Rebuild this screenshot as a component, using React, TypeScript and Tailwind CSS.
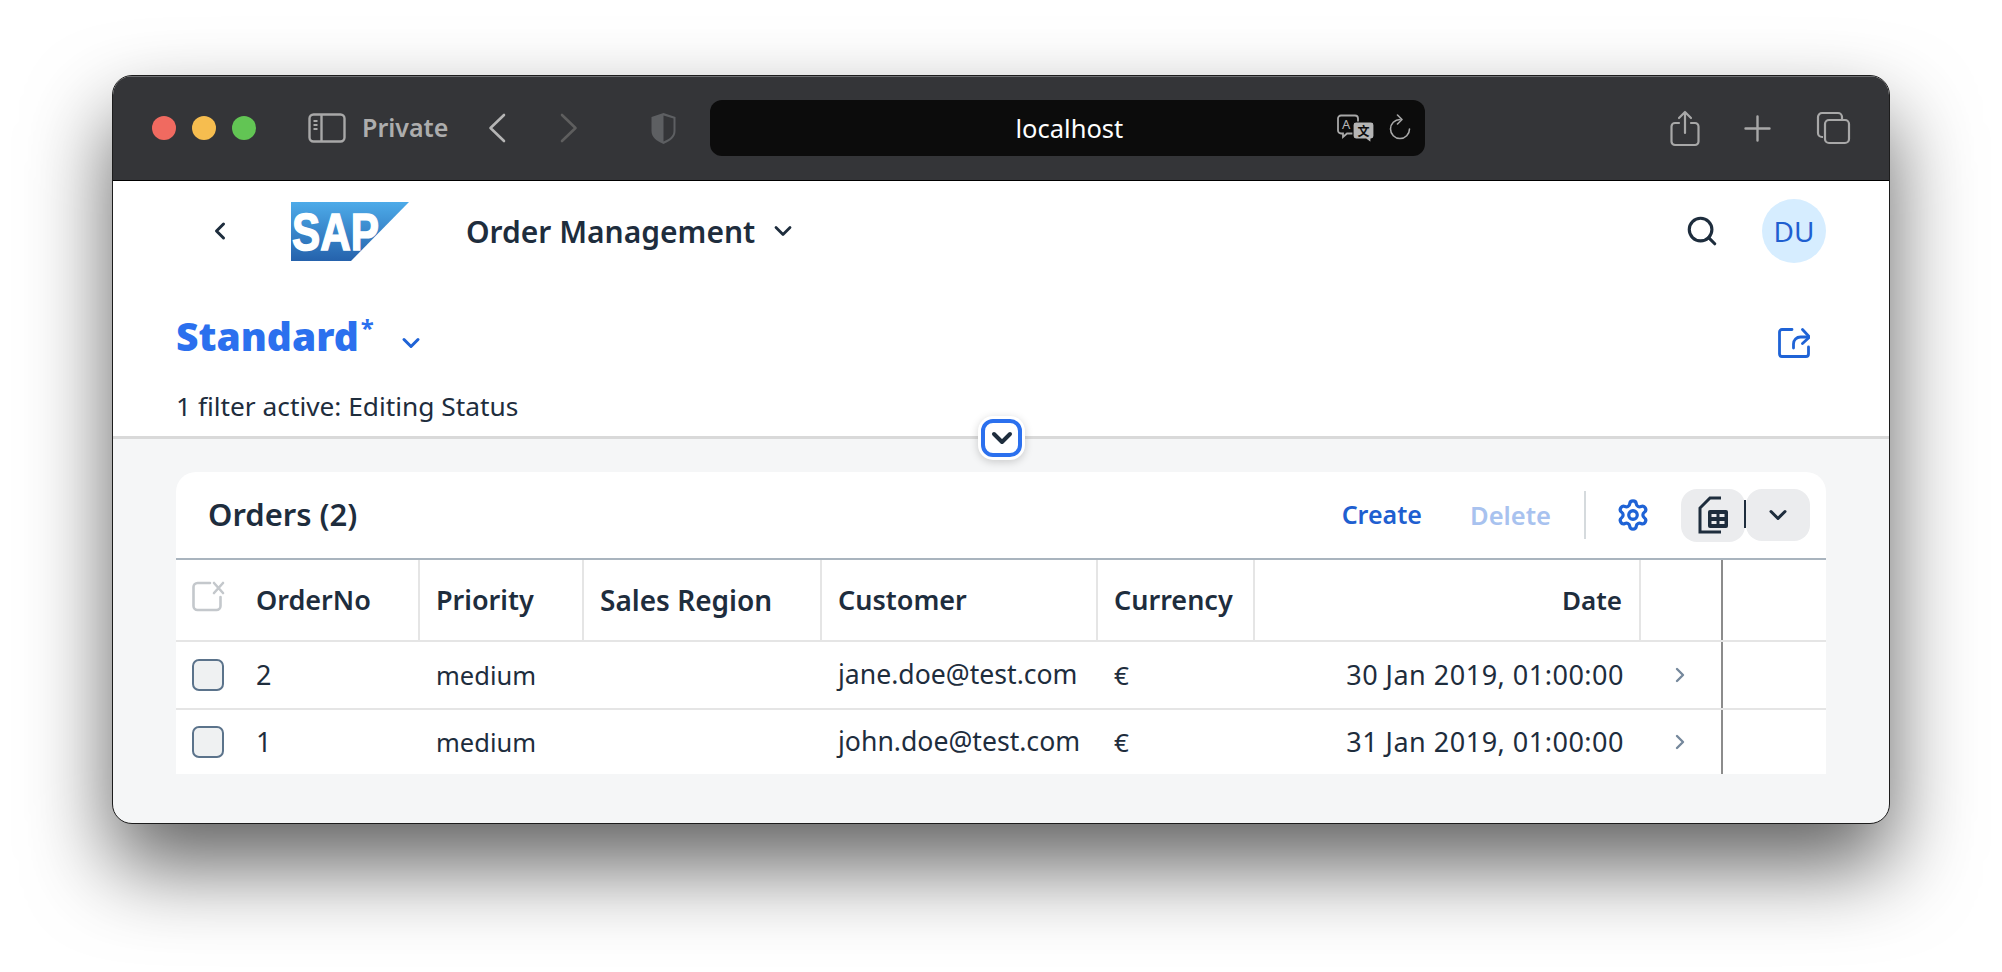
import { ChevronDown, ChevronLeft, ChevronRight, Search, Settings } from "lucide-react";

const FONT = "font-['Noto_Sans',sans-serif]";

const rows = [
  { no: "2", email: "jane.doe@test.com", date: "30 Jan 2019, 01:00:00" },
  { no: "1", email: "john.doe@test.com", date: "31 Jan 2019, 01:00:00" },
];

const COLS = "grid grid-cols-[67px_177px_164px_238px_276px_157px_386px_82px_1fr]";

function SidebarIcon() {
  return (
    <svg width="38" height="30" viewBox="0 0 38 30" fill="none" stroke="#a8a8a8" strokeWidth="2.4">
      <rect x="1.5" y="1.5" width="35" height="27" rx="4" />
      <path d="M13.5 1.5v27" />
      <path d="M5.5 8h4M5.5 12h4M5.5 16h4" strokeWidth="2" />
    </svg>
  );
}

function NavChevron({ back, color }: { back?: boolean; color: string }) {
  return (
    <svg width="18" height="30" viewBox="0 0 18 30" fill="none" stroke={color} strokeWidth="2.6" strokeLinecap="round" strokeLinejoin="round">
      <path d={back ? "M16 2 2.500 15 16 28" : "M2 2l13.500 13L2 28"} />
    </svg>
  );
}

function ShieldIcon() {
  return (
    <svg width="27" height="33" viewBox="0 0 27 33">
      <path d="M13.5 1 25.5 5v14c0 6-5 10-12 13C6.500 29 1.500 25 1.500 19V5z" fill="#5d5f62" />
      <path d="M13.500 3.500 23.500 6.500v12.500c0 5-4 8-10 10.500z" fill="#343538" />
    </svg>
  );
}

function TranslateIcon() {
  return (
    <svg width="38" height="30" viewBox="0 0 38 30">
      <path d="M4 1.500h14a3 3 0 0 1 3 3v12a3 3 0 0 1-3 3h-8l-4 3.500v-3.500H4a3 3 0 0 1-3-3v-12a3 3 0 0 1 3-3z" fill="#0c0c0c" stroke="#a8a8a8" strokeWidth="1.800" />
      <text x="5" y="15" fontSize="13" fill="#b5b5b5" fontFamily="Noto Sans, sans-serif">A</text>
      <path d="M19 8h15a3 3 0 0 1 3 3v11a3 3 0 0 1-3 3v4l-5-4h-10a3 3 0 0 1-3-3v-11a3 3 0 0 1 3-3z" fill="#b5b5b5" stroke="#0c0c0c" strokeWidth="1.200" />
      <text x="20.500" y="22" fontSize="12" fontWeight="700" fill="#0c0c0c" fontFamily="Noto Sans CJK SC, sans-serif">文</text>
    </svg>
  );
}

function ReloadIcon() {
  return (
    <svg width="22" height="26" viewBox="0 0 22 26" fill="none" stroke="#a8a8a8" strokeWidth="1.600" strokeLinecap="round" strokeLinejoin="round">
      <path d="M11 5.500a9.500 9.500 0 1 0 9.500 9.500" />
      <path d="M8.500 1 13 5.500 8.500 10" />
    </svg>
  );
}

function ShareIcon() {
  return (
    <svg width="30" height="37" viewBox="0 0 30 37" fill="none" stroke="#a8a8a8" strokeWidth="2.200" strokeLinecap="round" strokeLinejoin="round">
      <path d="M9 13H5a3.500 3.500 0 0 0-3.500 3.500v15A3.500 3.500 0 0 0 5 35h20a3.500 3.500 0 0 0 3.500-3.500v-15A3.500 3.500 0 0 0 25 13h-4" />
      <path d="M15 23V2M9 8l6-6 6 6" />
    </svg>
  );
}

function TabsIcon() {
  return (
    <svg width="35" height="34" viewBox="0 0 35 34" fill="none" stroke="#a8a8a8" strokeWidth="2.200">
      <path d="M7 26H6a4 4 0 0 1-4-4V6a4 4 0 0 1 4-4h16a4 4 0 0 1 4 4v2" />
      <rect x="9" y="9" width="24" height="23" rx="4" />
    </svg>
  );
}

function SapLogo() {
  return (
    <svg width="118" height="59" viewBox="0 0 118 59">
      <defs>
        <linearGradient id="sapBlue" x1="0" y1="0" x2="0" y2="1">
          <stop offset="0" stopColor="#4dabe9" />
          <stop offset="1" stopColor="#2562ac" />
        </linearGradient>
      </defs>
      <polygon points="0,0 118,0 60,59 0,59" fill="url(#sapBlue)" />
      <text x="1" y="48" fontSize="51" fontWeight="900" fill="#fff" textLength="87" lengthAdjust="spacingAndGlyphs" fontFamily="Liberation Sans, sans-serif" stroke="#fff" strokeWidth="1.500">SAP</text>
    </svg>
  );
}

function ExportIcon() {
  return (
    <svg width="32" height="31" viewBox="0 0 32 31" fill="none" stroke="#1f63d6" strokeWidth="2.800" strokeLinecap="round" strokeLinejoin="round">
      <path d="M14 2.500H4a2.500 2.500 0 0 0-2.500 2.500v22A2.500 2.500 0 0 0 4 29.500h24a2.500 2.500 0 0 0 2.500-2.500v-7" />
      <path d="M15.500 21v-4c0-4 3-7 7-7h8" />
      <path d="M24.500 2.500l7 7.500-7 6.500" />
    </svg>
  );
}

function SelectAllIcon() {
  return (
    <svg width="33" height="31" viewBox="0 0 33 31" fill="none" stroke="#c4c8cc" strokeWidth="2.600" strokeLinecap="round">
      <path d="M18 2H5.500A4 4 0 0 0 1.500 6v19a4 4 0 0 0 4 4h19a4 4 0 0 0 4-4v-9" />
      <path d="M22 2l9 10M31 2l-9 10" />
    </svg>
  );
}

function TableViewIcon() {
  return (
    <svg width="30" height="38" viewBox="0 0 30 38" fill="none" stroke="#1e2d3d" strokeWidth="3">
      <path d="M23 2H12L2 12v24h21" />
      <rect x="10" y="14" width="20" height="18" rx="2" fill="#1e2d3d" stroke="none" />
      <path d="M13.500 18h5v3h-5zM21.500 18h5v3h-5zM13.500 25h5v3h-5zM21.500 25h5v3h-5z" fill="#ebecee" stroke="none" />
    </svg>
  );
}

export default function App() {
  return (
    <div className={`h-[972px] bg-white pl-[112px] pt-[75px] overflow-hidden ${FONT}`}>
      <div className="w-[1778px] h-[749px] rounded-[20px] border border-[#1c1c1c] shadow-[0_42px_84px_rgba(0,0,0,0.62)] overflow-hidden flex flex-col bg-[#f5f6f7] relative">
        {/* safari toolbar */}
        <div className="h-[105px] shrink-0 bg-[#343538] border-b border-black shadow-[inset_0_1px_0_#6f7073] flex items-center">
          <div className="flex items-center gap-4 ml-[39px]">
            <span className="w-6 h-6 rounded-full bg-[#f06a60]" />
            <span className="w-6 h-6 rounded-full bg-[#f6bd4f]" />
            <span className="w-6 h-6 rounded-full bg-[#62c554]" />
          </div>
          <div className="ml-[52px]">
            <SidebarIcon />
          </div>
          <span className="ml-[16px] text-[25px] font-semibold text-[#adadad]">Private</span>
          <div className="ml-[40px]">
            <NavChevron back color="#b5b5b5" />
          </div>
          <div className="ml-[54px]">
            <NavChevron color="#5e5e5e" />
          </div>
          <div className="ml-[72px]">
            <ShieldIcon />
          </div>
          <div className="ml-[33px] w-[715px] h-[56px] rounded-[12px] bg-[#0c0c0c] flex items-center relative">
            <span className="w-full text-center text-[25.5px] text-white pl-[3px]">localhost</span>
            <div className="absolute right-[50px] top-[14px]">
              <TranslateIcon />
            </div>
            <div className="absolute right-[14px] top-[14px]">
              <ReloadIcon />
            </div>
          </div>
          <div className="ml-[245px]">
            <ShareIcon />
          </div>
          <svg className="ml-[44px]" width="27" height="27" viewBox="0 0 27 27" stroke="#a8a8a8" strokeWidth="2.400" strokeLinecap="round">
            <path d="M13.500 1.500v24M1.500 13.500h24" />
          </svg>
          <div className="ml-[45px]">
            <TabsIcon />
          </div>
        </div>

        {/* app header */}
        <div className="h-[258px] shrink-0 bg-white border-b-[3px] border-[#d9d9d9] text-[#1e2d3d] flex flex-col">
          <div className="h-[100px] flex items-center pl-[93px] pr-[63px]">
            <ChevronLeft className="w-7 h-7" strokeWidth={2.6} />
            <div className="ml-[57px]">
              <SapLogo />
            </div>
            <span className="ml-[57px] text-[30px] font-semibold">Order Management</span>
            <ChevronDown className="ml-[14px] w-7 h-7" strokeWidth={2.4} />
            <Search className="ml-auto w-[34px] h-[34px]" strokeWidth={2.2} />
            <div className="ml-[43px] w-16 h-16 rounded-full bg-[#d6edff] text-[#1f5fd0] text-[28px] flex items-center justify-center">DU</div>
          </div>
          <div className="flex items-start pl-[63px] pr-[79px] mt-[35px]">
            <span className="text-[39px] font-black text-[#2b70ee] leading-none">Standard</span>
            <span className="ml-[2px] text-[24px] font-bold text-[#2b70ee] leading-none">*</span>
            <ChevronDown className="ml-[23px] mt-[13px] w-7 h-7 text-[#1f63d6]" strokeWidth={2.6} />
            <div className="ml-auto mt-[11px]">
              <ExportIcon />
            </div>
          </div>
          <div className="pl-[63px] mt-[30px] text-[26.3px] leading-[36px]">1 filter active: Editing Status</div>
        </div>

        {/* collapse toggle, sits over the header border */}
        <div className="absolute left-[868px] top-[343px] w-[41px] h-[38px] rounded-[12px] bg-white border-[4px] border-[#2b70ee] shadow-[0_0_0_3px_#fff,0_2px_8px_3px_rgba(0,0,0,0.18)] flex items-center justify-center">
          <ChevronDown className="w-8 h-8 text-[#1e2d3d]" strokeWidth={3} />
        </div>

        {/* orders table */}
        <div className="mx-[63px] mt-[33px] bg-white rounded-t-[20px] text-[#1e2d3d] flex flex-col">
          <div className="h-[88px] flex items-center pl-[32px] pr-[16px] border-b-2 border-[#a9b4be]">
            <span className="text-[31px] font-semibold pb-[2px]">Orders (2)</span>
            <span className="ml-auto text-[25px] font-semibold text-[#1f5fd0]">Create</span>
            <span className="ml-[48px] text-[25.5px] font-semibold text-[#a8c2ef]">Delete</span>
            <span className="ml-[33px] w-[2px] h-[48px] bg-[#d5dadd]" />
            <Settings className="ml-[30px] w-[34px] h-[34px] text-[#1f63d6]" strokeWidth={2.3} />
            <div className="ml-[31px] w-[64px] h-[53px] rounded-[16px] bg-[#ebecee] flex items-center justify-center relative">
              <TableViewIcon />
              <span className="absolute right-[-1px] top-[11px] w-[2px] h-[28px] bg-[#1e2d3d]" />
            </div>
            <div className="ml-[1px] w-[64px] h-[52px] rounded-[16px] bg-[#ebecee] flex items-center justify-center">
              <ChevronDown className="w-7 h-7" strokeWidth={2.6} />
            </div>
          </div>

          <div className={`${COLS} h-[82px] border-b-2 border-[#e5e5e5] text-[27px] font-semibold`}>
            <div className="flex items-center pl-4">
              <div className="mb-[8px]">
                <SelectAllIcon />
              </div>
            </div>
            <div className="border-r-2 border-[#e5e5e5] flex items-center pl-[13px]">OrderNo</div>
            <div className="border-r-2 border-[#e5e5e5] flex items-center pl-[16px]">Priority</div>
            <div className="border-r-2 border-[#e5e5e5] flex items-center pl-[16px] text-[28px]">Sales Region</div>
            <div className="border-r-2 border-[#e5e5e5] flex items-center pl-[16px]">Customer</div>
            <div className="border-r-2 border-[#e5e5e5] flex items-center pl-[16px]">Currency</div>
            <div className="border-r-2 border-[#e5e5e5] flex items-center justify-end pr-[17px] text-[26px]">Date</div>
            <div className="border-r-2 border-[#8c8c8c]" />
          </div>

          {rows.map((row, i) => (
            <div key={row.no} className={`${COLS} ${i === 0 ? "h-[68px] border-b-2 border-[#e5e5e5]" : "h-[64px]"}`}>
              <div className="flex items-center pl-4">
                <span className="w-8 h-8 rounded-[7px] border-2 border-[#5b738b] bg-[#eff1f2]" />
              </div>
              <div className="flex items-center pl-[13px] text-[27px]">{row.no}</div>
              <div className="flex items-center pl-[16px] text-[25.5px]">medium</div>
              <div />
              <div className="flex items-center pl-[16px] text-[26.6px]">{row.email}</div>
              <div className="flex items-center pl-[16px] text-[26px]">€</div>
              <div className="flex items-center justify-end pr-[17px] text-[27px] tracking-[0.5px]">{row.date}</div>
              <div className="border-r-2 border-[#8c8c8c] flex items-center pl-[27px]">
                <ChevronRight className="w-6 h-6 text-[#75889c]" strokeWidth={2.4} />
              </div>
            </div>
          ))}
        </div>
      </div>
    </div>
  );
}
